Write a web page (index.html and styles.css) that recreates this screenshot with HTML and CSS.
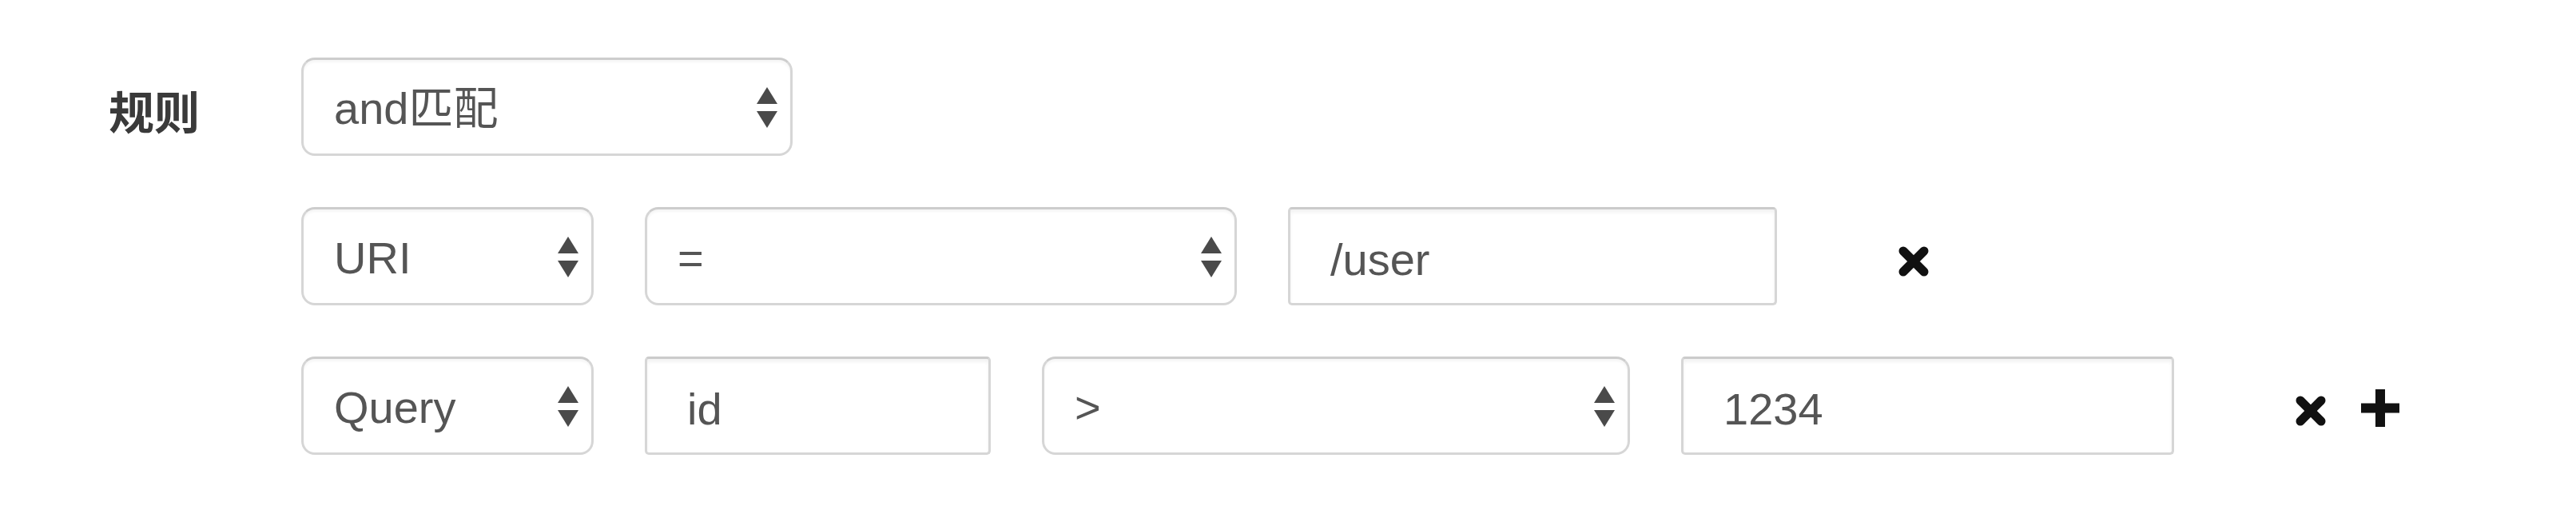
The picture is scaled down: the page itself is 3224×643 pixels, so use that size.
FILE: index.html
```html
<!DOCTYPE html>
<html lang="zh-CN">
<head>
<meta charset="utf-8">
<title>规则</title>
<link rel="stylesheet" href="styles.css">
</head>
<body>
<form class="form">
  <div class="row">
    <label class="label">规则</label>
    <div class="select w-615"><span class="value">and匹配</span><svg class="caret" viewBox="0 0 26 51" width="26" height="51"><polygon points="13,0 26,21 0,21"/><polygon points="0,30 26,30 13,51"/></svg></div>
  </div>
  <div class="row indent">
    <div class="select w-366"><span class="value">URI</span><svg class="caret" viewBox="0 0 26 51" width="26" height="51"><polygon points="13,0 26,21 0,21"/><polygon points="0,30 26,30 13,51"/></svg></div>
    <div class="select w-741"><span class="value">=</span><svg class="caret" viewBox="0 0 26 51" width="26" height="51"><polygon points="13,0 26,21 0,21"/><polygon points="0,30 26,30 13,51"/></svg></div>
    <input class="input w-612" type="text" value="/user">
    <div class="actions">
      <svg class="icon-remove" viewBox="0 0 40 40" width="40" height="40"><path d="M7 7L33 33M33 7L7 33"/></svg>
    </div>
  </div>
  <div class="row indent">
    <div class="select w-366"><span class="value">Query</span><svg class="caret" viewBox="0 0 26 51" width="26" height="51"><polygon points="13,0 26,21 0,21"/><polygon points="0,30 26,30 13,51"/></svg></div>
    <input class="input w-433" type="text" value="id">
    <div class="select w-736"><span class="value">&gt;</span><svg class="caret" viewBox="0 0 26 51" width="26" height="51"><polygon points="13,0 26,21 0,21"/><polygon points="0,30 26,30 13,51"/></svg></div>
    <input class="input w-617" type="text" value="1234">
    <div class="actions">
      <svg class="icon-remove" viewBox="0 0 40 40" width="40" height="40"><path d="M7 7L33 33M33 7L7 33"/></svg>
      <svg class="icon-plus" viewBox="0 0 48 47" width="48" height="47"><path d="M0 23.5H48M24 0V47"/></svg>
    </div>
  </div>
</form>
</body>
</html>
```
FILE: styles.css
```css
html, body {
  margin: 0;
  padding: 0;
  background: #ffffff;
}

body {
  font-family: "Liberation Sans", "Noto Sans CJK SC", sans-serif;
  color: #555555;
}

.form {
  padding: 72px 0 0 136px;
  margin: 0;
}

.row {
  display: flex;
  align-items: center;
  gap: 64px;
  height: 123px;
  margin-bottom: 64px;
}

.row.indent {
  padding-left: 241px;
}

.row .label {
  width: 177px;
  flex: none;
  font-size: 57px;
  line-height: 1;
  font-weight: bold;
  color: #3a3a3a;
  padding-top: 18px;
  font-family: "Liberation Sans", "Noto Sans CJK SC", sans-serif;
}

.select {
  box-sizing: border-box;
  height: 123px;
  flex: none;
  display: flex;
  align-items: center;
  justify-content: space-between;
  padding: 0 16px 0 38px;
  border: 3px solid #d6d6d6;
  border-top-color: #cdcdcd;
  border-radius: 17px;
  background: #ffffff;
  box-shadow: inset 0 3px 3px rgba(0, 0, 0, 0.04);
  font-size: 56px;
  color: #555555;
}

.select .value {
  line-height: 1;
  padding-top: 4px;
}

.select .caret {
  fill: #4a4a4a;
  flex: none;
  margin-top: 2px;
}

.input {
  box-sizing: border-box;
  height: 123px;
  flex: none;
  padding: 8px 20px 0 50px;
  margin: 0;
  border: 3px solid #d6d6d6;
  border-top-color: #cbcbcb;
  border-radius: 5px;
  background: #ffffff;
  box-shadow: inset 0 4px 4px rgba(0, 0, 0, 0.05);
  font-family: "Liberation Sans", "Noto Sans CJK SC", sans-serif;
  font-size: 56px;
  color: #555555;
  outline: none;
}

.w-615 { width: 615px; }
.w-366 { width: 366px; }
.w-741 { width: 741px; }
.w-736 { width: 736px; }
.w-612 { width: 612px; }
.w-433 { width: 433px; }
.w-617 { width: 617px; }

.actions {
  display: flex;
  align-items: center;
  gap: 43px;
  margin-left: 87px;
}

.icon-remove {
  stroke: #111111;
  stroke-width: 11;
  stroke-linecap: round;
  fill: none;
  margin-top: 12px;
}

.icon-plus {
  stroke: #111111;
  stroke-width: 12;
  fill: none;
  margin-top: 6px;
}
```
